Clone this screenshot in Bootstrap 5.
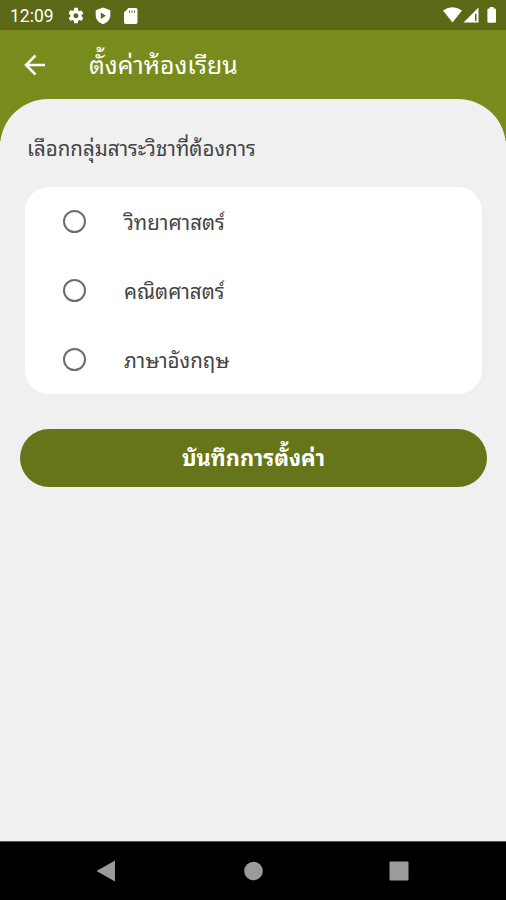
<!DOCTYPE html>
<html lang="th">
<head>
<meta charset="utf-8">
<meta name="viewport" content="width=device-width, initial-scale=1">
<title>ตั้งค่าห้องเรียน</title>
<link href="https://cdn.jsdelivr.net/npm/bootstrap@5.3.0/dist/css/bootstrap.min.css" rel="stylesheet">
<style>
body{font-family:Roboto,"Noto Sans Thai Looped","Noto Looped Thai",Loma,Garuda,Waree,"Noto Sans Thai","Noto Sans",sans-serif;background:#f0f0f0;height:900px;overflow:hidden}
.screen{height:900px}
.status-bar{height:30px;background:#5b6816;padding:0 8px 0 10px}
.clock{font-size:17.5px;line-height:30px;padding-top:2px;width:56px}
.title-bar{height:69px;background:#788c1d;padding-left:20px}
.title-bar h1{font-size:24.8px;line-height:40px;margin-left:39px;padding-top:3px}
.backdrop{background:linear-gradient(#788c1d 42px,#f0f0f0 42px)}
.sheet{background:#f0f0f0;border-radius:48px 48px 0 0;padding:35px 19px 0 20px}
.prompt{font-size:20.500px;line-height:30px;margin:0 0 23px 7px;color:#444}
.choices{border-radius:24px;margin:0 5px;height:207px}
.choice{height:69px;padding-left:38px;font-size:20.500px;color:#444}
.choice .form-check-input{width:23px;height:23px;border:2.5px solid #6d6d6d;margin:0 38px 0 0;background:#fff}
.choice span{padding-top:3px}
.save{height:58px;margin-top:35px;background:#667519;font-size:21.8px;line-height:34px;padding-top:8px}
.nav-keys{height:59px;background:#000;border-top:1px solid #555;padding:0 97px 0 96px}
</style>
<script src="https://cdn.jsdelivr.net/npm/bootstrap@5.3.0/dist/js/bootstrap.bundle.min.js"></script>
</head>
<body>
<div class="screen d-flex flex-column">
<header>
<div class="status-bar d-flex align-items-center text-white">
<span class="clock">12:09</span>
<svg width="90" height="30" fill="#fff"><g transform="translate(.6 6.3) scale(.78)"><path fill-rule="evenodd" d="M19.14 12.94a7 7 0 0 0 0-1.88l2.03-1.58a.5.5 0 0 0 .12-.61l-1.92-3.32a.5.5 0 0 0-.59-.22l-2.39.96a7 7 0 0 0-1.62-.94l-.36-2.54A.5.5 0 0 0 13.93 2h-3.84a.5.5 0 0 0-.48.41l-.36 2.54c-.59.24-1.13.57-1.62.94l-2.39-.96a.5.5 0 0 0-.59.22L2.73 8.87a.5.5 0 0 0 .12.61l2.03 1.58a7 7 0 0 0 0 1.88l-2.03 1.58a.5.5 0 0 0-.12.61l1.92 3.32c.12.22.37.29.59.22l2.39-.96c.5.38 1.03.7 1.62.94l.36 2.54c.05.24.24.41.48.41h3.84c.24 0 .44-.17.47-.41l.36-2.54a7 7 0 0 0 1.62-.94l2.39.96c.22.08.47 0 .59-.22l1.92-3.32a.5.5 0 0 0-.12-.61zM12 15.2a3.2 3.2 0 1 1 0-6.400 3.200 3.200 0 0 1 0 6.400z"/></g><path fill-rule="evenodd" d="M37 7.500l7.300 2.700v5c0 4.300-3 7.500-7.300 9-4.300-1.500-7.300-4.700-7.300-9v-5zM34.800 12.500v6.400l5-3.200z"/><path fill-rule="evenodd" d="M62.500 8h7.300a1.700 1.700 0 0 1 1.700 1.700v12.600a1.700 1.700 0 0 1-1.700 1.700h-10.100a1.700 1.700 0 0 1-1.700-1.700V12.500zm.5 2.500v2.300h1v-2.300zm2.500 0v2.300h1v-2.300zm2.500 0v2.300h1v-2.300z"/></svg>
<svg class="ms-auto" width="56" height="30" fill="#fff"><path d="M1 10.500Q10.500 4 20 10.500L10.500 22.500z"/><path fill-rule="evenodd" d="M36.500 7.500v15H21.500zM33 14v7h1.500v-7z"/><path d="M47.700 7h4v1.600h1a1.300 1.300 0 0 1 1.300 1.300v11.600a1.300 1.300 0 0 1-1.300 1.300h-6a1.300 1.300 0 0 1-1.300-1.300V9.900a1.300 1.300 0 0 1 1.300-1.300h1z"/></svg>
</div>
<div class="title-bar d-flex align-items-center text-white">
<svg width="30" height="30" fill="none" stroke="#fff" stroke-width="2.500"><path d="M25 15H6.500M15.500 5.500L6 15l9.500 9.500"/></svg>
<h1 class="mb-0 fw-normal">ตั้งค่าห้องเรียน</h1>
</div>
</header>
<div class="backdrop flex-grow-1 d-flex">
<main class="sheet flex-grow-1">
<p class="prompt">เลือกกลุ่มสาระวิชาที่ต้องการ</p>
<div class="choices bg-white">
<label class="choice d-flex align-items-center"><input class="form-check-input" type="radio" name="subject"><span>วิทยาศาสตร์</span></label>
<label class="choice d-flex align-items-center"><input class="form-check-input" type="radio" name="subject"><span>คณิตศาสตร์</span></label>
<label class="choice d-flex align-items-center"><input class="form-check-input" type="radio" name="subject"><span>ภาษาอังกฤษ</span></label>
</div>
<button class="save btn rounded-pill w-100 border-0 text-white fw-bold" type="button">บันทึกการตั้งค่า</button>
</main>
</div>
<footer class="nav-keys d-flex align-items-center justify-content-between">
<svg width="20" height="22" fill="#9b9b9b"><path d="M0.500 11L19 .5v21z"/></svg>
<svg width="20" height="20" fill="#9b9b9b"><circle cx="10.500" cy="10" r="9.300"/></svg>
<svg width="20" height="20" fill="#9b9b9b"><rect x=".5" y=".5" width="19" height="19" rx="1"/></svg>
</footer>
</div>
</body>
</html>
